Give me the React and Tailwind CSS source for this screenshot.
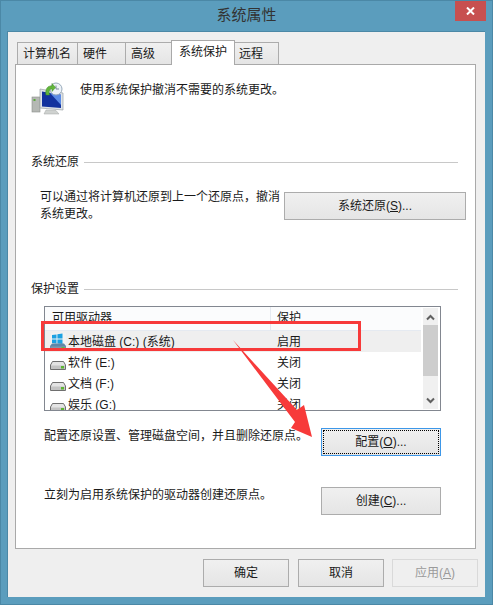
const FONT = 'font-["Liberation_Sans","Noto_Sans_CJK_SC",sans-serif]';

function Tab({ label, width, active, pad = 'pl-[5px]' }) {
  if (active) {
    return (
      <div className={`${width} h-[25px] -mb-px relative z-10 bg-white border border-b-0 border-[#a9a9a9] flex items-center justify-center pb-0.5 text-[#1a1a1a]`}>
        {label}
      </div>
    );
  }
  return (
    <div className={`${width} h-[22px] -ml-px first:ml-0 bg-gradient-to-b from-[#f0f0f0] to-[#e5e5e5] border border-b-0 border-[#acacac] flex items-center ${pad} text-[#1a1a1a]`}>
      {label}
    </div>
  );
}

function Btn({ label, className = '', focused, disabled }) {
  if (focused) {
    return (
      <div className={`h-[28px] border border-[#3d97e8] bg-gradient-to-b from-[#f0f0f0] to-[#e5e5e5] p-px ${className}`}>
        <div className="h-full border border-dotted border-black flex items-center justify-center text-[#1a1a1a]">{label}</div>
      </div>
    );
  }
  return (
    <div className={`h-[28px] border flex items-center justify-center ${disabled ? 'border-[#d9d9d9] bg-[#efefef] text-[#9a9a9a]' : 'border-[#acacac] bg-gradient-to-b from-[#f0f0f0] to-[#e5e5e5] text-[#1a1a1a]'} ${className}`}>
      {label}
    </div>
  );
}

function GroupTitle({ label }) {
  return (
    <div className="flex items-center gap-[5px] h-4 text-[#1a1a1a]">
      <span>{label}</span>
      <div className="flex-1 h-px bg-[#c8c8c8]" />
    </div>
  );
}

function DriveIcon() {
  return (
    <svg width="16" height="9" viewBox="0 0 16 9">
      <path d="M2.5 0.5H13.5L15.5 4V8.5H0.5V4Z" fill="#e4e4e4" stroke="#6f6f6f" />
      <path d="M1 4.5H15V8H1Z" fill="#c4c4c4" />
      <rect x="11" y="5" width="3" height="2.5" fill="#5cb531" />
    </svg>
  );
}

function SystemDriveIcon() {
  return (
    <svg width="16" height="17" viewBox="0 0 16 17">
      <rect x="1" y="0" width="15" height="17" fill="#f4f4f4" opacity="0.6" />
      <path d="M2 2L6.5 1.4V5.6H2ZM7.4 1.3L12.5 0.5V5.6H7.4ZM2 6.4H6.5V10.4L2 9.9ZM7.4 6.4H12.5V11L7.4 10.5Z" fill="#1ba1e2" />
      <path d="M2 10.5H14L16 13V17H0V13Z" fill="#5f87a8" />
      <path d="M0.5 13.5H15.5V16.5H0.5Z" fill="#7f98ad" />
      <rect x="11.5" y="14" width="3" height="2" fill="#58c23a" />
    </svg>
  );
}

function RestoreIcon() {
  return (
    <svg width="34" height="36" viewBox="0 0 34 36">
      <rect x="1" y="17" width="8" height="15" fill="#b5b8b4" stroke="#8b8e8a" strokeWidth="0.6" />
      <rect x="2.5" y="19" width="2" height="2" fill="#5aa83c" />
      <path d="M9 9L32 13V30L9 28Z" fill="#dfe4e8" stroke="#9aa0a5" strokeWidth="0.7" />
      <path d="M11 11.5L30 14.8V28L11 26.5Z" fill="#12329e" />
      <path d="M19 13L30 14.8V25Z" fill="#5b8be6" />
      <path d="M15 30L25 30.5L28 34H13Z" fill="#cfd2d0" stroke="#a3a6a4" strokeWidth="0.5" />
      <circle cx="25" cy="9" r="6" fill="#eef3f8" stroke="#98aabb" />
      <path d="M25 5.5V9H28" fill="none" stroke="#7b8a9a" strokeWidth="1" />
      <path d="M15 15C14 9 16.5 5.5 21 6L21 3.5L24.5 7.5L21 11.5V9C18.5 8.7 17.5 11 18.5 15Z" fill="#63b53c" stroke="#3f8f24" strokeWidth="0.5" />
    </svg>
  );
}

const rows = [
  { name: '软件 (E:)', status: '关闭' },
  { name: '文档 (F:)', status: '关闭' },
  { name: '娱乐 (G:)', status: '关闭' },
];

export default function App() {
  return (
    <div className={`${FONT} relative w-[493px] h-[605px] overflow-hidden bg-[#5b9dbd] border border-[#4b88a6] pl-[6px] pr-[6px] pb-[7px] text-[12px] leading-4`}>
      {/* Title bar */}
      <div className="relative h-[30px] flex items-center justify-center text-[15px] text-[#333] pb-0.5">
        系统属性
        <div className="absolute right-0 top-0 w-[31px] h-[20px] bg-[#c75050] flex items-center justify-center">
          <svg width="9" height="8" viewBox="0 0 9 8">
            <path d="M1 0.5L8 7.5M8 0.5L1 7.5" stroke="#fff" strokeWidth="2" />
          </svg>
        </div>
      </div>

      {/* Client area */}
      <div className="h-[566px] w-[478px] bg-[#efefef] border-t border-l border-[#4b88a6] px-[7px] pt-[7px]">
        {/* Tabs */}
        <div className="h-[25px] flex items-end pl-[2px]">
          <Tab label="计算机名" width="w-[61px]" />
          <Tab label="硬件" width="w-[49px]" />
          <Tab label="高级" width="w-[47px]" />
          <Tab label="系统保护" width="w-[64px] -ml-px" active />
          <Tab label="远程" width="w-[45px]" pad="pl-[4px]" />
        </div>

        {/* Panel */}
        <div className="w-[461px] h-[485px] bg-white border border-[#a9a9a9] pl-[15px] pr-[17px] pt-[15px] text-[#1a1a1a]">
          <div className="flex items-start h-[36px]">
            <RestoreIcon />
            <span className="ml-[15px] mt-[2px]">使用系统保护撤消不需要的系统更改。</span>
          </div>

          <div className="mt-[38px]">
            <GroupTitle label="系统还原" />
            <div className="mt-[22px] ml-[9px] -mr-[8px] flex items-start justify-between">
              <div className="w-[240px] leading-[17px] -mt-[3px]">可以通过将计算机还原到上一个还原点，撤消系统更改。</div>
              <Btn label={<span>系统还原(<u>S</u>)...</span>} className="w-[182px]" />
            </div>
          </div>

          <div className="mt-[58px]">
            <GroupTitle label="保护设置" />
            {/* Drive list */}
            <div className="mt-[9px] ml-[13px] w-[397px] h-[105px] border border-[#828790] bg-white flex overflow-hidden">
              <div className="flex-1 min-w-0">
                <div className="h-[24px] flex bg-[#fbfcfd] border-b border-[#e5eaf1] items-center">
                  <span className="w-[226px] pl-[7px] pb-[2px] border-r border-[#e5eaf1] h-full flex items-center">可用驱动器</span>
                  <span className="pl-[6px] pb-[2px]">保护</span>
                </div>
                <div className="h-[21px] flex items-center bg-[#efefef]">
                  <div className="w-[226px] pl-[5px] flex items-center gap-[2px]">
                    <SystemDriveIcon />
                    <span>本地磁盘 (C:) (系统)</span>
                  </div>
                  <span className="pl-[6px]">启用</span>
                </div>
                {rows.map(r => (
                  <div key={r.name} className="h-[21px] flex items-center">
                    <div className="w-[226px] pl-[5px] flex items-center gap-[2px]">
                      <div className="w-4 flex justify-center pt-[5px]"><DriveIcon /></div>
                      <span>{r.name}</span>
                    </div>
                    <span className="pl-[6px]">{r.status}</span>
                  </div>
                ))}
              </div>
              {/* Scrollbar */}
              <div className="w-[15px] ml-[2px] mr-[2px] my-px bg-[#f0f0f0] flex flex-col items-center">
                <svg className="mt-[6px]" width="9" height="7" viewBox="0 0 9 7"><path d="M1 5.5L4.5 2L8 5.5" fill="none" stroke="#606060" strokeWidth="2" /></svg>
                <div className="mt-[4px] w-[15px] h-[51px] bg-[#cdcdcd]" />
                <svg className="mt-auto mb-[5px]" width="9" height="7" viewBox="0 0 9 7"><path d="M1 1.5L4.5 5L8 1.5" fill="none" stroke="#606060" strokeWidth="2" /></svg>
              </div>
            </div>

            <div className="mt-[17px] ml-[13px] flex items-start justify-between pr-[17px]">
              <span>配置还原设置、管理磁盘空间，并且删除还原点。</span>
              <Btn focused label={<span>配置(<u>O</u>)...</span>} className="w-[120px]" />
            </div>
            <div className="mt-[31px] ml-[13px] flex items-start justify-between pr-[17px]">
              <span>立刻为启用系统保护的驱动器创建还原点。</span>
              <Btn label={<span>创建(<u>C</u>)...</span>} className="w-[120px]" />
            </div>
          </div>
        </div>

        {/* Dialog buttons */}
        <div className="mt-[10px] flex justify-end gap-[9px] w-[463px]">
          <Btn label="确定" className="w-[86px]" />
          <Btn label="取消" className="w-[86px]" />
          <Btn disabled label={<span>应用(<u>A</u>)</span>} className="w-[86px] -ml-px" />
        </div>
      </div>

      {/* Annotation over the screenshot */}
      <div className="absolute left-[40px] top-[320px] w-[320px] h-[30px] border-[3px] border-[#f73a3a]" />
      <svg className="absolute -left-px -top-px pointer-events-none" width="493" height="605" viewBox="0 0 493 605">
        <polygon points="233,340 297,410 304,405 312,437 291,428 295,422" fill="#f73a3a" />
      </svg>
    </div>
  );
}
